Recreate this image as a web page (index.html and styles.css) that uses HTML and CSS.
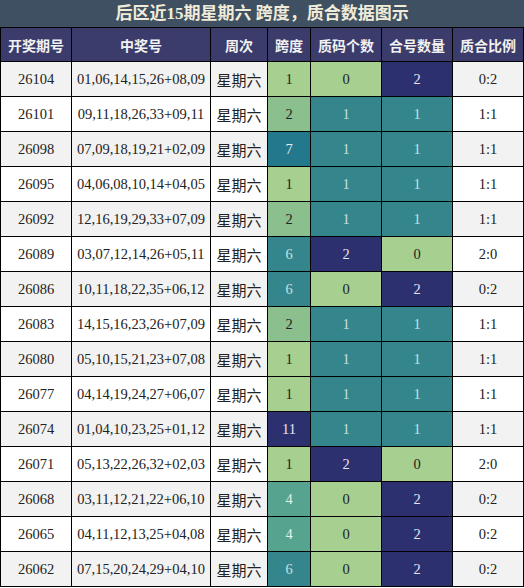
FILE: index.html
```html
<!DOCTYPE html>
<html lang="zh">

<head>
    <meta charset="UTF-8">
    <title>后区近15期星期六 跨度，质合数据图示</title>
    <link rel="stylesheet" href="styles.css">
</head>

<body>
    <table class="chart">
        <colgroup>
            <col class="w-issue">
            <col class="w-nums">
            <col class="w-week">
            <col class="w-span">
            <col class="w-mid">
            <col class="w-mid">
            <col class="w-mid">
        </colgroup>
        <thead>
            <tr>
                <th colspan="7" class="title">后区近15期星期六 跨度，质合数据图示</th>
            </tr>
            <tr class="head">
                <th>开奖期号</th>
                <th>中奖号</th>
                <th>周次</th>
                <th>跨度</th>
                <th>质码个数</th>
                <th>合号数量</th>
                <th>质合比例</th>
            </tr>
        </thead>
        <tbody>
            <tr>
                <td>26104</td><td>01,06,14,15,26+08,09</td><td class="cjk">星期六</td>
                <td class="c-lg">1</td><td class="c-lg">0</td><td class="c-navy">2</td><td>0:2</td>
            </tr>
            <tr>
                <td>26101</td><td>09,11,18,26,33+09,11</td><td class="cjk">星期六</td>
                <td class="c-g">2</td><td class="c-teal">1</td><td class="c-teal">1</td><td>1:1</td>
            </tr>
            <tr>
                <td>26098</td><td>07,09,18,19,21+02,09</td><td class="cjk">星期六</td>
                <td class="c-deep">7</td><td class="c-teal">1</td><td class="c-teal">1</td><td>1:1</td>
            </tr>
            <tr>
                <td>26095</td><td>04,06,08,10,14+04,05</td><td class="cjk">星期六</td>
                <td class="c-lg">1</td><td class="c-teal">1</td><td class="c-teal">1</td><td>1:1</td>
            </tr>
            <tr>
                <td>26092</td><td>12,16,19,29,33+07,09</td><td class="cjk">星期六</td>
                <td class="c-g">2</td><td class="c-teal">1</td><td class="c-teal">1</td><td>1:1</td>
            </tr>
            <tr>
                <td>26089</td><td>03,07,12,14,26+05,11</td><td class="cjk">星期六</td>
                <td class="c-teal">6</td><td class="c-navy">2</td><td class="c-lg">0</td><td>2:0</td>
            </tr>
            <tr>
                <td>26086</td><td>10,11,18,22,35+06,12</td><td class="cjk">星期六</td>
                <td class="c-teal">6</td><td class="c-lg">0</td><td class="c-navy">2</td><td>0:2</td>
            </tr>
            <tr>
                <td>26083</td><td>14,15,16,23,26+07,09</td><td class="cjk">星期六</td>
                <td class="c-g">2</td><td class="c-teal">1</td><td class="c-teal">1</td><td>1:1</td>
            </tr>
            <tr>
                <td>26080</td><td>05,10,15,21,23+07,08</td><td class="cjk">星期六</td>
                <td class="c-lg">1</td><td class="c-teal">1</td><td class="c-teal">1</td><td>1:1</td>
            </tr>
            <tr>
                <td>26077</td><td>04,14,19,24,27+06,07</td><td class="cjk">星期六</td>
                <td class="c-lg">1</td><td class="c-teal">1</td><td class="c-teal">1</td><td>1:1</td>
            </tr>
            <tr>
                <td>26074</td><td>01,04,10,23,25+01,12</td><td class="cjk">星期六</td>
                <td class="c-navy">11</td><td class="c-teal">1</td><td class="c-teal">1</td><td>1:1</td>
            </tr>
            <tr>
                <td>26071</td><td>05,13,22,26,32+02,03</td><td class="cjk">星期六</td>
                <td class="c-lg">1</td><td class="c-navy">2</td><td class="c-lg">0</td><td>2:0</td>
            </tr>
            <tr>
                <td>26068</td><td>03,11,12,21,22+06,10</td><td class="cjk">星期六</td>
                <td class="c-mint">4</td><td class="c-lg">0</td><td class="c-navy">2</td><td>0:2</td>
            </tr>
            <tr>
                <td>26065</td><td>04,11,12,13,25+04,08</td><td class="cjk">星期六</td>
                <td class="c-mint">4</td><td class="c-lg">0</td><td class="c-navy">2</td><td>0:2</td>
            </tr>
            <tr>
                <td>26062</td><td>07,15,20,24,29+04,10</td><td class="cjk">星期六</td>
                <td class="c-teal">6</td><td class="c-lg">0</td><td class="c-navy">2</td><td>0:2</td>
            </tr>
        </tbody>
    </table>
</body>

</html>
```

FILE: styles.css
```css
body {
    margin: 0;
    background-color: #ffffff;
    font-family: "Liberation Serif", "Noto Sans CJK SC", serif;
}

.chart {
    border-collapse: collapse;
    width: 523px;
    table-layout: fixed;
}

.w-issue { width: 71px; }
.w-nums { width: 139px; }
.w-week { width: 57px; }
.w-span { width: 43px; }
.w-mid { width: 71px; }

.chart th,
.chart td {
    border: 1px solid #000000;
    text-align: center;
    padding: 0;
    overflow: hidden;
    white-space: nowrap;
}

.chart th.title {
    height: 26px;
    background-color: #3e5061;
    color: #f1ecd9;
    font-size: 17px;
    font-weight: bold;
    font-family: "Liberation Serif", "Noto Sans CJK SC", sans-serif;
    border-color: #3e5061;
    border-bottom-color: #000000;
    line-height: 26px;
}

.head th {
    height: 33px;
    background-color: #3b3b6c;
    color: #f1f1f1;
    font-size: 14px;
    font-weight: bold;
    font-family: "Noto Sans CJK SC", sans-serif;
}

.chart tbody tr {
    background-color: #ffffff;
}

.chart tbody tr:nth-child(odd) {
    background-color: #f2f2f2;
}

.chart td {
    height: 34px;
    font-size: 14.5px;
    color: #222222;
}

.chart td.cjk {
    font-family: "Noto Sans CJK SC", sans-serif;
    font-size: 15px;
}

.c-lg {
    background-color: #a6cf90;
}

.c-g {
    background-color: #8bbf8d;
}

.chart td.c-mint {
    background-color: #56a48f;
    color: #e4f0ea;
}

.chart td.c-teal {
    background-color: #34868c;
    color: #c6e0e0;
}

.chart td.c-deep {
    background-color: #24788b;
    color: #e4eef0;
}

.chart td.c-navy {
    background-color: #2d306e;
    color: #e4e6f0;
}
```
